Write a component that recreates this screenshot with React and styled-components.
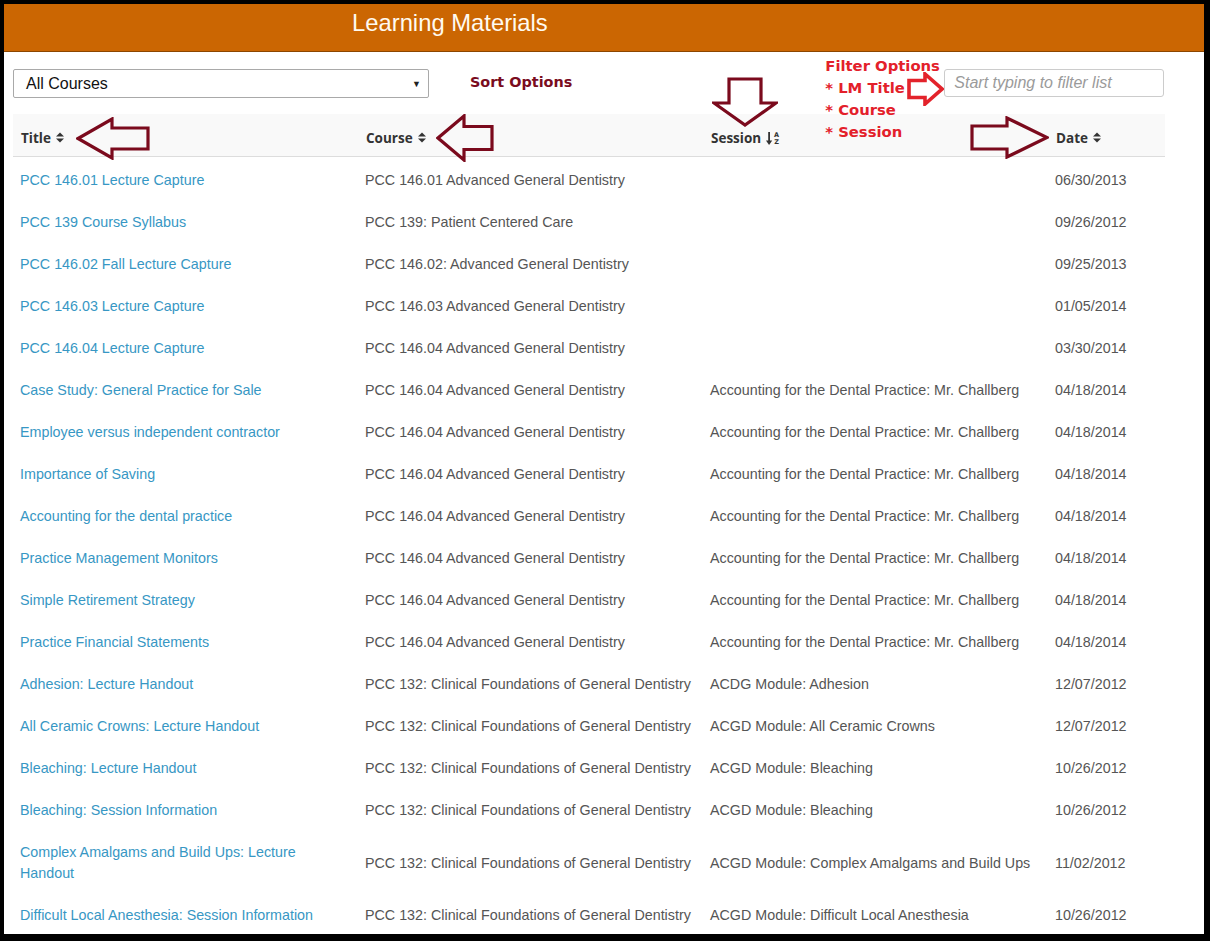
import React from "react";
import styled, { createGlobalStyle } from "styled-components";

const rows = [
  ["PCC 146.01 Lecture Capture", "PCC 146.01 Advanced General Dentistry", "", "06/30/2013"],
  ["PCC 139 Course Syllabus", "PCC 139: Patient Centered Care", "", "09/26/2012"],
  ["PCC 146.02 Fall Lecture Capture", "PCC 146.02: Advanced General Dentistry", "", "09/25/2013"],
  ["PCC 146.03 Lecture Capture", "PCC 146.03 Advanced General Dentistry", "", "01/05/2014"],
  ["PCC 146.04 Lecture Capture", "PCC 146.04 Advanced General Dentistry", "", "03/30/2014"],
  ["Case Study: General Practice for Sale", "PCC 146.04 Advanced General Dentistry", "Accounting for the Dental Practice: Mr. Challberg", "04/18/2014"],
  ["Employee versus independent contractor", "PCC 146.04 Advanced General Dentistry", "Accounting for the Dental Practice: Mr. Challberg", "04/18/2014"],
  ["Importance of Saving", "PCC 146.04 Advanced General Dentistry", "Accounting for the Dental Practice: Mr. Challberg", "04/18/2014"],
  ["Accounting for the dental practice", "PCC 146.04 Advanced General Dentistry", "Accounting for the Dental Practice: Mr. Challberg", "04/18/2014"],
  ["Practice Management Monitors", "PCC 146.04 Advanced General Dentistry", "Accounting for the Dental Practice: Mr. Challberg", "04/18/2014"],
  ["Simple Retirement Strategy", "PCC 146.04 Advanced General Dentistry", "Accounting for the Dental Practice: Mr. Challberg", "04/18/2014"],
  ["Practice Financial Statements", "PCC 146.04 Advanced General Dentistry", "Accounting for the Dental Practice: Mr. Challberg", "04/18/2014"],
  ["Adhesion: Lecture Handout", "PCC 132: Clinical Foundations of General Dentistry", "ACDG Module: Adhesion", "12/07/2012"],
  ["All Ceramic Crowns: Lecture Handout", "PCC 132: Clinical Foundations of General Dentistry", "ACGD Module: All Ceramic Crowns", "12/07/2012"],
  ["Bleaching: Lecture Handout", "PCC 132: Clinical Foundations of General Dentistry", "ACGD Module: Bleaching", "10/26/2012"],
  ["Bleaching: Session Information", "PCC 132: Clinical Foundations of General Dentistry", "ACGD Module: Bleaching", "10/26/2012"],
  ["Complex Amalgams and Build Ups: Lecture Handout", "PCC 132: Clinical Foundations of General Dentistry", "ACGD Module: Complex Amalgams and Build Ups", "11/02/2012"],
  ["Difficult Local Anesthesia: Session Information", "PCC 132: Clinical Foundations of General Dentistry", "ACGD Module: Difficult Local Anesthesia", "10/26/2012"],
];

// outlined block arrow, drawn pointing right then turned by dir
const arrowPoints = (L, H, S, K, p = 2) => [
  [p, H / 2 - S / 2],
  [L - K, H / 2 - S / 2],
  [L - K, p],
  [L - p, H / 2],
  [L - K, H - p],
  [L - K, H / 2 + S / 2],
  [p, H / 2 + S / 2],
];

const BlockArrow = ({ x, y, L, H, S, K, dir = "right", color, weight = 3.2 }) => {
  let pts = arrowPoints(L, H, S, K);
  let w = L;
  let h = H;
  if (dir === "left") pts = pts.map(([a, b]) => [L - a, b]);
  if (dir === "down") {
    pts = pts.map(([a, b]) => [b, a]);
    w = H;
    h = L;
  }
  return (
    <ArrowSvg width={w} height={h} $x={x} $y={y}>
      <polygon
        points={pts.map((q) => q.join(",")).join(" ")}
        fill="none"
        stroke={color}
        strokeWidth={weight}
        strokeLinejoin="miter"
      />
    </ArrowSvg>
  );
};

const SortIcon = () => (
  <svg width="8" height="11" viewBox="0 0 8 11">
    <polygon points="0,4.5 4,0.5 8,4.5" fill="#333" />
    <polygon points="0,6.5 4,10.5 8,6.5" fill="#333" />
  </svg>
);

const AlphaIcon = () => (
  <svg width="14" height="16" viewBox="0 0 14 16">
    <rect x="2.2" y="2" width="1.8" height="10" fill="#333" />
    <polygon points="0,10.5 3.1,15 6.2,10.5" fill="#333" />
    <text x="10.5" y="7" fontSize="6.5" fontFamily="DejaVu Sans" fontWeight="bold" textAnchor="middle" fill="#333">A</text>
    <text x="10.5" y="14" fontSize="6.5" fontFamily="DejaVu Sans" fontWeight="bold" textAnchor="middle" fill="#333">Z</text>
  </svg>
);

const App = () => {
  return (
    <>
      <GlobalStyle />
      <Frame>
        <Panel>
          <Header>
            <HeaderTitle>Learning Materials</HeaderTitle>
          </Header>
          <Toolbar>
            <SelectBox>
              <span>All Courses</span>
              <Caret>▼</Caret>
            </SelectBox>
            <SortNote>Sort Options</SortNote>
            <FilterNote>
              <div>Filter Options</div>
              <div>* LM Title</div>
              <div>* Course</div>
              <div>* Session</div>
            </FilterNote>
            <FilterInput placeholder="Start typing to filter list" />
          </Toolbar>
          <Table>
            <colgroup>
              <col style={{ width: 345 }} />
              <col style={{ width: 345 }} />
              <col style={{ width: 345 }} />
              <col style={{ width: 117 }} />
            </colgroup>
            <thead>
              <tr>
                <HeadCell>
                  <HeadLabel>Title <SortIcon /></HeadLabel>
                </HeadCell>
                <HeadCell>
                  <HeadLabel>Course <SortIcon /></HeadLabel>
                </HeadCell>
                <HeadCell>
                  <HeadLabel>Session <AlphaIcon /></HeadLabel>
                </HeadCell>
                <HeadCell>
                  <HeadLabel>Date <SortIcon /></HeadLabel>
                </HeadCell>
              </tr>
            </thead>
            <tbody>
              {rows.map((r, i) => (
                <tr key={i}>
                  <Cell>
                    <TitleLink href="#">{r[0]}</TitleLink>
                  </Cell>
                  <Cell>{r[1]}</Cell>
                  <Cell>{r[2]}</Cell>
                  <Cell>{r[3]}</Cell>
                </tr>
              ))}
            </tbody>
          </Table>

          <BlockArrow x={72} y={113} L={74} H={43} S={21} K={36} dir="left" color="#7b0a1d" />
          <BlockArrow x={432} y={110} L={58} H={48} S={23} K={28} dir="left" color="#7b0a1d" />
          <BlockArrow x={708} y={73} L={50} H={66} S={32} K={24} dir="down" color="#7b0a1d" />
          <BlockArrow x={966} y={112} L={79} H={43} S={23} K={42} dir="right" color="#7b0a1d" />
          <BlockArrow x={903} y={68} L={37} H={34} S={17} K={19} dir="right" color="#e3232b" weight={3.6} />
        </Panel>
      </Frame>
    </>
  );
};

const GlobalStyle = createGlobalStyle`
  html, body {
    margin: 0;
    padding: 0;
    background: #000;
  }
  body {
    font-family: "Liberation Sans", Arial, sans-serif;
  }
`;

const Frame = styled.div`
  width: 1210px;
  height: 941px;
  box-sizing: border-box;
  padding: 4px 6px 7px 4px;
  background: #000;
  overflow: hidden;
`;

const Panel = styled.div`
  position: relative;
  height: 930px;
  background: #fff;
  overflow: hidden;
`;

const Header = styled.div`
  height: 47px;
  background: #cb6602;
  border-bottom: 1px solid #8c4600;
  padding-left: 348px;
  box-sizing: content-box;
`;

const HeaderTitle = styled.h1`
  margin: 0;
  padding-top: 6px;
  font-family: "Liberation Sans", Arial, sans-serif;
  font-weight: normal;
  font-size: 23.8px;
  line-height: 26px;
  color: #fffaf0;
`;

const Toolbar = styled.div`
  height: 62px;
  box-sizing: border-box;
  padding: 17px 0 0 9px;
  display: flex;
  align-items: flex-start;
`;

const SelectBox = styled.div`
  width: 416px;
  height: 29px;
  box-sizing: border-box;
  border: 1px solid #a9a9a9;
  border-radius: 2px;
  padding: 0 7px 0 12px;
  display: flex;
  align-items: center;
  justify-content: space-between;
  font-size: 16px;
  color: #111;
`;

const Caret = styled.span`
  font-size: 9px;
  color: #222;
`;

const SortNote = styled.div`
  margin: 5px 0 0 41px;
  font-family: "DejaVu Sans", Verdana, sans-serif;
  font-weight: bold;
  font-size: 14.4px;
  color: #7a0c1e;
`;

const FilterNote = styled.div`
  position: relative;
  z-index: 1;
  margin: -14px 0 0 253px;
  font-family: "DejaVu Sans", Verdana, sans-serif;
  font-weight: bold;
  font-size: 14.8px;
  line-height: 22px;
  color: #e3202a;
  width: 119px;
  white-space: nowrap;
`;

const FilterInput = styled.input`
  width: 220px;
  height: 28px;
  box-sizing: border-box;
  border: 1px solid #ccc;
  border-radius: 3px;
  padding: 0 9px;
  font-family: "Liberation Sans", Arial, sans-serif;
  font-size: 16px;
  outline: none;
  &::placeholder {
    color: #9a9a9a;
    font-style: italic;
  }
`;

const Table = styled.table`
  margin-left: 9px;
  width: 1152px;
  table-layout: fixed;
  border-collapse: collapse;
  font-size: 14.3px;
  color: #555;
`;

const HeadCell = styled.th`
  height: 42px;
  box-sizing: border-box;
  padding: 6px 8px 0;
  text-align: left;
  background: #f9f9f9;
  border-bottom: 1px solid #ddd;
  font-family: "Open Sans", sans-serif;
  font-weight: bold;
  font-size: 13.5px;
  color: #333;
`;

const HeadLabel = styled.span`
  display: inline-flex;
  align-items: center;
  gap: 5px;
`;

const Cell = styled.td`
  padding: 13.5px 8px 7.5px 7px;
  line-height: 21px;
  vertical-align: middle;
`;

const TitleLink = styled.a`
  color: #3797c4;
  text-decoration: none;
`;

const ArrowSvg = styled.svg`
  position: absolute;
  left: ${(p) => p.$x}px;
  top: ${(p) => p.$y}px;
  z-index: 2;
`;

export default App;
